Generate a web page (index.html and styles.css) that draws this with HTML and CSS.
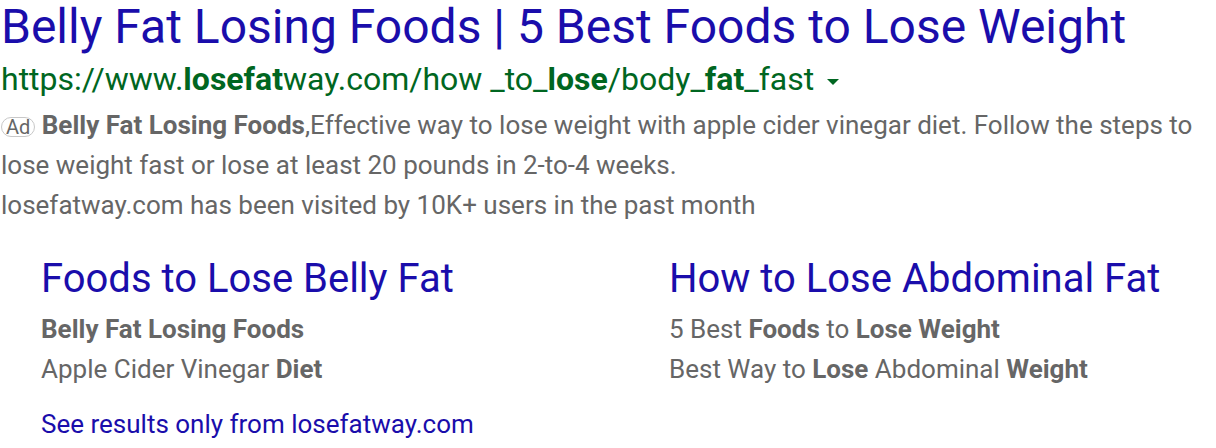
FILE: index.html
```html
<!DOCTYPE html>
<html lang="en">
<head>
<meta charset="utf-8">
<title>Belly Fat Losing Foods</title>
<link rel="stylesheet" href="styles.css">
</head>
<body>
<div class="ad">
  <a class="title" href="#">Belly Fat Losing Foods | 5 Best Foods to Lose Weight</a>
  <div class="url">https://www.<b>losefat</b>way.com/how _to_<b>lose</b>/body_<b>fat</b>_fast <span class="caret"></span></div>
  <div class="desc"><span class="badge">Ad</span> <b>Belly Fat Losing Foods</b>,Effective way to lose weight with apple cider vinegar diet. Follow the steps to lose weight fast or lose at least 20 pounds in 2-to-4 weeks.</div>
  <div class="visits">losefatway.com has been visited by 10K+ users in the past month</div>
  <div class="sitelinks">
    <div class="sitelink">
      <a class="sl-title" href="#">Foods to Lose Belly Fat</a>
      <div class="sl-line"><b>Belly Fat Losing Foods</b></div>
      <div class="sl-line">Apple Cider Vinegar <b>Diet</b></div>
    </div>
    <div class="sitelink">
      <a class="sl-title" href="#">How to Lose Abdominal Fat</a>
      <div class="sl-line">5 Best <b>Foods</b> to <b>Lose Weight</b></div>
      <div class="sl-line">Best Way to <b>Lose</b> Abdominal <b>Weight</b></div>
    </div>
  </div>
  <a class="more" href="#">See results only from losefatway.com</a>
</div>
</body>
</html>
```

FILE: styles.css
```css
html, body {
  margin: 0;
  padding: 0;
  background: #fff;
}
body {
  font-family: Roboto, "Liberation Sans", sans-serif;
  color: #666;
}
a {
  text-decoration: none;
}
.ad {
  display: flex;
  flex-direction: column;
  align-items: flex-start;
  padding: 0 0 0 1px;
  width: 1210px;
}
.title {
  color: #1a0dab;
  font-size: 48px;
  line-height: 53px;
}
.url {
  color: #006621;
  font-size: 32px;
  line-height: 40px;
  margin-top: 6px;
}
.url b {
  font-weight: 700;
}
.caret {
  display: inline-block;
  width: 0;
  height: 0;
  border-left: 6px solid transparent;
  border-right: 6px solid transparent;
  border-top: 6px solid #006621;
  vertical-align: middle;
  margin-left: 5px;
}
.desc, .visits {
  font-size: 26px;
  line-height: 40px;
}
.desc {
  margin-top: 6px;
}
.desc b {
  font-weight: 700;
}
.badge {
  display: inline-block;
  border: 1px solid #c8c8c8;
  border-radius: 10px;
  font-size: 20px;
  line-height: 17px;
  padding: 1px 4px 0;
  color: #666;
  vertical-align: middle;
}
.sitelinks {
  display: grid;
  grid-template-columns: 628px 540px;
  padding-left: 40px;
  margin-top: 30px;
}
.sitelink {
  display: flex;
  flex-direction: column;
}
.sl-title {
  color: #1a0dab;
  font-size: 40px;
  line-height: 48px;
  margin-bottom: 6px;
}
.sl-line {
  font-size: 26px;
  line-height: 40px;
}
.sl-line b {
  font-weight: 700;
}
.more {
  color: #1a0dab;
  font-size: 26px;
  line-height: 40px;
  margin-left: 40px;
  margin-top: 15px;
}
```
